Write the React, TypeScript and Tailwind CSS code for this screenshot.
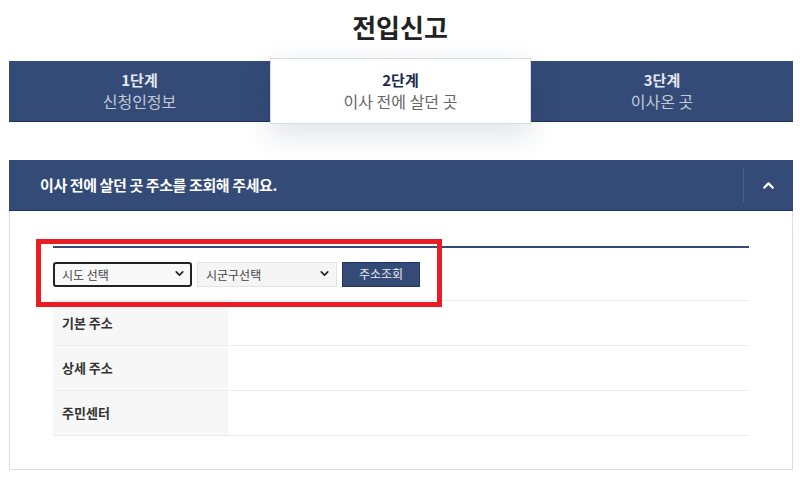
import React from 'react';
import { ChevronUp, ChevronDown } from 'lucide-react';

const steps = [
  { no: '1단계', label: '신청인정보' },
  { no: '2단계', label: '이사 전에 살던 곳' },
  { no: '3단계', label: '이사온 곳' },
];

const rows = ['기본 주소', '상세 주소', '주민센터'];

const App = () => {
  const active = 1;

  return (
    <div className="relative min-h-screen w-[800px] bg-white font-['Noto_Sans_CJK_KR',sans-serif] text-[#222]">
      {/* 제목 */}
      <h1 className="h-[54px] text-center text-[26px] font-bold leading-[54px] text-[#222]">전입신고</h1>

      {/* 단계 탭 */}
      <div className="ml-[9px] mt-[4px] grid w-[784px] grid-cols-[261px_261px_262px] items-start">
        {steps.map((s, i) =>
          i === active ? (
            <div
              key={s.no}
              className="relative z-10 flex h-[66px] flex-col items-center justify-center border border-[#d8dce6] bg-white shadow-[0_10px_30px_rgba(30,40,70,0.14)]"
            >
              <span className="text-[15px] font-bold leading-[20px] text-[#1c2a4e]">{s.no}</span>
              <span className="text-[16px] leading-[22px] text-[#666]">{s.label}</span>
            </div>
          ) : (
            <div
              key={s.no}
              className="mt-[3px] flex h-[61px] flex-col items-center justify-center border-b border-[#1d2f5e] bg-[#344a77]"
            >
              <span className="text-[15px] font-bold leading-[20px] text-[#e4e7ee]">{s.no}</span>
              <span className="text-[16px] leading-[22px] text-[#c3c9d6]">{s.label}</span>
            </div>
          )
        )}
      </div>

      {/* 주소 조회 패널 */}
      <section className="ml-[9px] mt-[36px] w-[784px]">
        <div className="flex h-[51px] items-center border-b border-[#1f3263] bg-[#344a77]">
          <p className="flex-1 pl-[31px] text-[15px] font-bold tracking-[-0.4px] text-white">
            이사 전에 살던 곳 주소를 조회해 주세요.
          </p>
          <div className="h-[34px] w-px bg-[#4d628c]" />
          <button className="flex h-full w-[49px] items-center justify-center text-white">
            <ChevronUp size={17} strokeWidth={3} />
          </button>
        </div>

        <div className="border border-t-0 border-[#dedede] px-[43px] pb-[33px] pt-[35px]">
          <div className="h-[2px] bg-[#344a77]" />
          <div className="flex h-[52px] items-center gap-[5px]">
            <div className="relative">
              <select className="h-[25px] w-[139px] appearance-none rounded-[3px] border-2 border-[#222] bg-[#f8f8f8] pl-[7px] text-[12px] text-[#444] outline-none">
                <option>시도 선택</option>
              </select>
              <ChevronDown size={13} strokeWidth={3} className="pointer-events-none absolute right-[6px] top-[6px] text-[#222]" />
            </div>
            <div className="relative">
              <select className="h-[25px] w-[140px] appearance-none border border-[#e2e2e2] bg-[#f5f5f5] pl-[8px] text-[12px] text-[#444] outline-none">
                <option>시군구선택</option>
              </select>
              <ChevronDown size={13} strokeWidth={3} className="pointer-events-none absolute right-[6px] top-[6px] text-[#222]" />
            </div>
            <button className="h-[25px] w-[78px] border border-[#23365f] bg-[#344a77] text-[12px] text-[#e8ebf1]">
              주소조회
            </button>
          </div>
          <div className="border-t border-[#ececec]">
            {rows.map((r) => (
              <div key={r} className="flex h-[45px] border-b border-[#ececec]">
                <div className="flex w-[175px] items-center bg-[#f7f7f7] pl-[9px] text-[13px] font-bold text-[#333]">
                  {r}
                </div>
                <div className="flex-1" />
              </div>
            ))}
          </div>
        </div>
      </section>

      {/* 강조 표시 */}
      <div className="pointer-events-none absolute left-[36px] top-[239px] h-[68px] w-[406px] border-[5px] border-[#ec1c24]" />
    </div>
  );
};

export default App;
